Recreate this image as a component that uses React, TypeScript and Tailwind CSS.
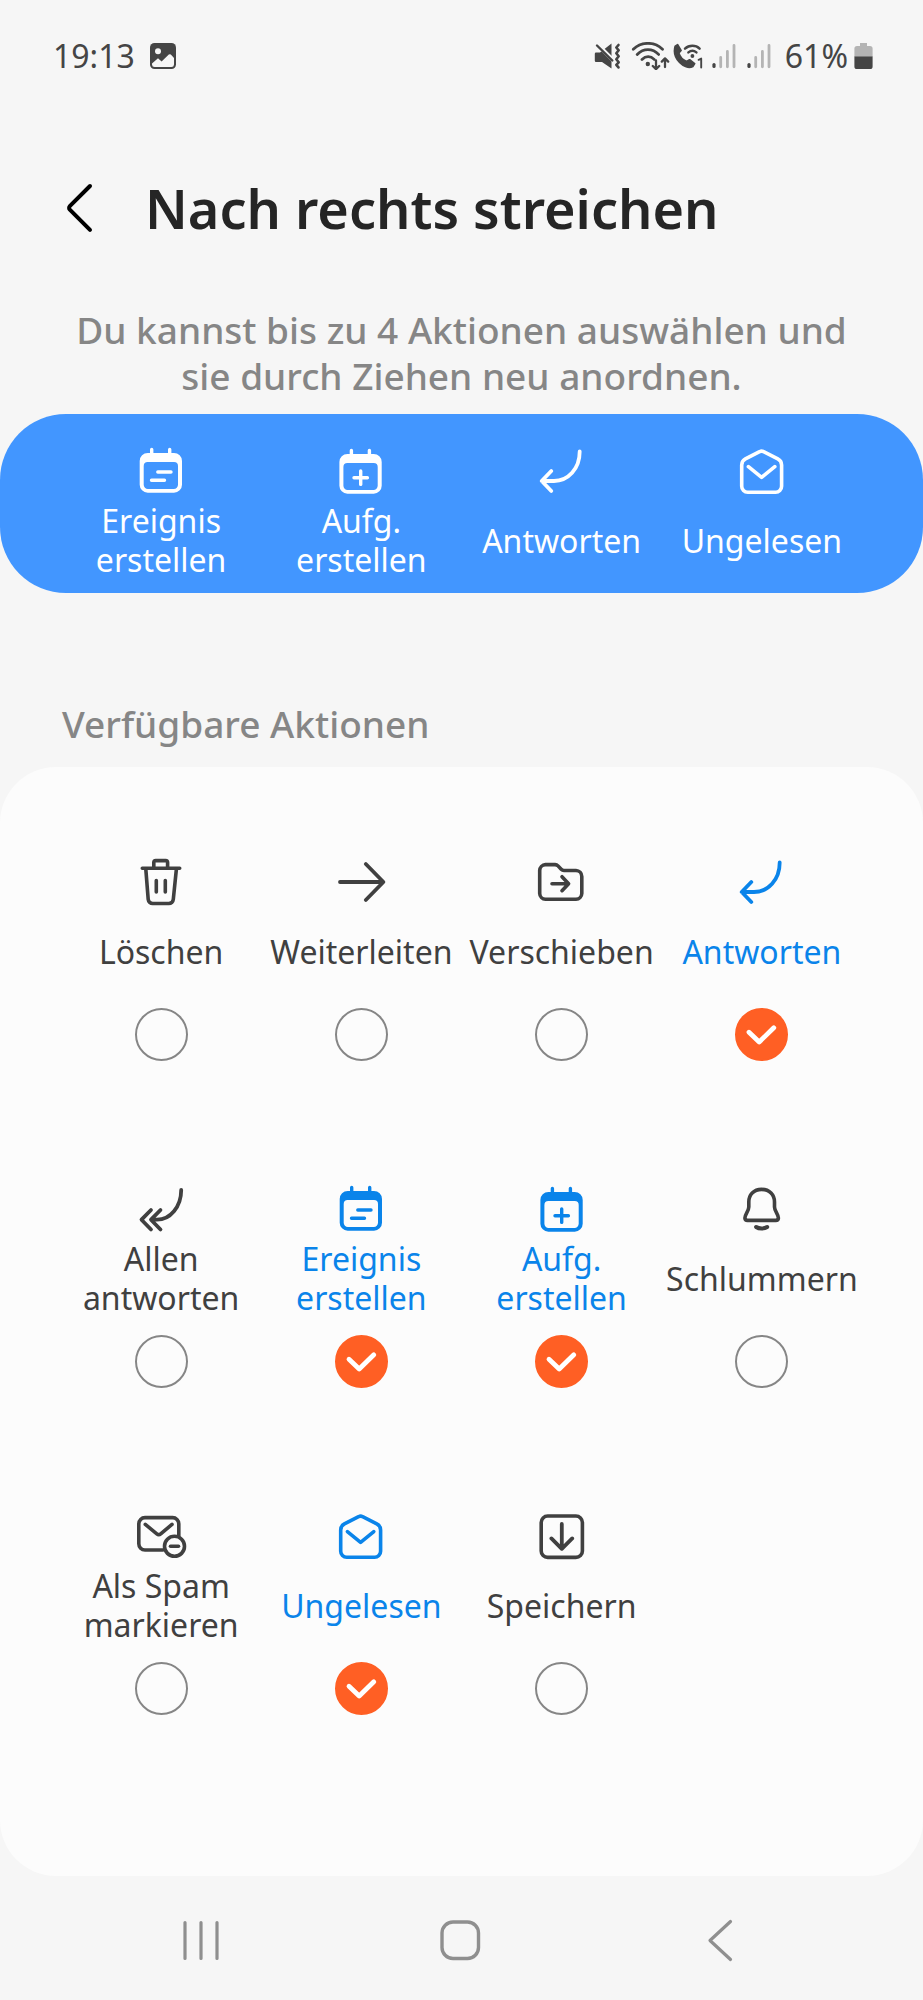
import { useState } from "react";
import type { ReactNode } from "react";

type IconName =
  | "trash"
  | "forward"
  | "move"
  | "reply"
  | "replyAll"
  | "event"
  | "task"
  | "snooze"
  | "spam"
  | "unread"
  | "save";

interface Action {
  id: IconName;
  label: string;
}

const ACTIONS: Action[] = [
  { id: "trash", label: "Löschen" },
  { id: "forward", label: "Weiterleiten" },
  { id: "move", label: "Verschieben" },
  { id: "reply", label: "Antworten" },
  { id: "replyAll", label: "Allen antworten" },
  { id: "event", label: "Ereignis erstellen" },
  { id: "task", label: "Aufg. erstellen" },
  { id: "snooze", label: "Schlummern" },
  { id: "spam", label: "Als Spam markieren" },
  { id: "unread", label: "Ungelesen" },
  { id: "save", label: "Speichern" },
];

const MAX_ACTIONS = 4;

const SHAPES: Record<IconName, ReactNode> = {
  trash: (
    <>
      <path d="M5.3 10.3H42.7M16.8 10V4.6A2 2 0 0 1 18.8 2.6H28.6A2 2 0 0 1 30.6 4.6V10" />
      <path d="M8.8 11L11.2 41.4A4.5 4.5 0 0 0 15.7 45.5H31.8A4.5 4.5 0 0 0 36.3 41.4L39.4 11" />
      <path d="M19.3 22.5V34M28.3 22.5V34" />
    </>
  ),
  forward: <path d="M3 24H46M28.8 6L46.4 24L28.8 42" strokeWidth="3.8" />,
  move: (
    <>
      <path d="M7.5 6.6H17A4 4 0 0 1 20 7.9L23.2 11.3A4 4 0 0 0 26 12.5H38A6 6 0 0 1 43.8 18.5V35.5A6 6 0 0 1 38 41.3H7.5A6 6 0 0 1 1.7 35.5V12.5A6 6 0 0 1 7.5 6.6Z" />
      <path d="M14 25.7H30M24 18.7L30.6 25.7L24 32.7" />
    </>
  ),
  reply: <path d="M41.7 4.5C41.7 22 30 34 16 34H4M13.3 24L3.7 34L13.3 44" strokeWidth="3.8" />,
  replyAll: (
    <path
      d="M44.2 5C44.2 22 33 34.7 20 34.7H14.5M14 25L4.5 34.7L14 44.5M23.5 25L14 34.7L23.5 44.5"
      strokeWidth="3.8"
    />
  ),
  event: (
    <>
      <path
        fill="currentColor"
        stroke="none"
        fillRule="evenodd"
        d="M10.7 6H37A8 8 0 0 1 45 14V37.7A8 8 0 0 1 37 45.7H10.7A8 8 0 0 1 2.7 37.7V14A8 8 0 0 1 10.7 6ZM10.7 15A4 4 0 0 0 6.7 19V37.7A4.2 4.2 0 0 0 10.9 41.9H36.8A4.2 4.2 0 0 0 41 37.7V19A4 4 0 0 0 37 15Z"
      />
      <path d="M14.7 2.5V8M32.7 2.5V8M20.8 25H34M14.5 33.3H27.5" strokeWidth="3.4" />
    </>
  ),
  task: (
    <>
      <path
        fill="currentColor"
        stroke="none"
        fillRule="evenodd"
        d="M10.4 7H36.7A8 8 0 0 1 44.7 15V38.7A8 8 0 0 1 36.7 46.7H10.4A8 8 0 0 1 2.4 38.7V15A8 8 0 0 1 10.4 7ZM10.4 16A4 4 0 0 0 6.4 20V38.7A4.2 4.2 0 0 0 10.6 42.9H36.5A4.2 4.2 0 0 0 40.7 38.7V20A4 4 0 0 0 36.7 16Z"
      />
      <path d="M14.4 3.5V9M32.4 3.5V9M17 30.7H30.4M23.7 24V37.4" strokeWidth="3.4" />
    </>
  ),
  snooze: (
    <>
      <path
        d="M23.6 4.4C15.6 4.4 10.8 10 10.8 17V22C10.8 26 6.9 29.6 6.9 33A2.6 2.6 0 0 0 9.5 35.4H37.8A2.6 2.6 0 0 0 40.4 33C40.4 29.6 36.5 26 36.5 22V17C36.5 10 31.6 4.4 23.6 4.4Z"
        strokeWidth="3.6"
      />
      <path d="M18.1 42C21 44 26.3 44 29.2 42" strokeWidth="4" />
    </>
  ),
  spam: (
    <>
      <path d="M26 38H8A6.2 6.2 0 0 1 1.8 31.8V11.8A6.2 6.2 0 0 1 8 5.6H35.6A6.2 6.2 0 0 1 41.8 11.8V24" />
      <path d="M8.3 12.4L19.8 21.8A3 3 0 0 0 23.7 21.8L35 12.4" />
      <circle cx="37.5" cy="34.3" r="10" />
      <path d="M33.5 34.3H41.5" />
    </>
  ),
  unread: (
    <>
      <path d="M21.6 4.7A4 4 0 0 1 25.6 4.7L39.8 11.9A7 7 0 0 1 43.6 18V39.3A6 6 0 0 1 37.6 45.3H9.7A6 6 0 0 1 3.7 39.3V18A7 7 0 0 1 7.4 11.9Z" />
      <path d="M10.4 19.6L23.6 30.4L36.8 19.6" />
    </>
  ),
  save: (
    <>
      <rect x="3.2" y="4" width="41.2" height="41.4" rx="6.5" />
      <path d="M23.8 12V36.5M13.4 26.4L23.8 36.8L34.2 26.4" strokeWidth="3.8" />
    </>
  ),
};

function ActionIcon({ name }: { name: IconName }) {
  return (
    <svg
      viewBox="0 0 48 48"
      className="size-12 shrink-0 overflow-visible"
      fill="none"
      stroke="currentColor"
      strokeWidth="3.6"
      strokeLinecap="round"
      strokeLinejoin="round"
      aria-hidden="true"
    >
      {SHAPES[name]}
    </svg>
  );
}

function SignalIcon() {
  return (
    <svg viewBox="0 0 24 28" className="h-7 w-6" strokeWidth="3.2" strokeLinecap="round" aria-hidden="true">
      <path d="M2 24.5V22.5" stroke="#454545" />
      <path d="M8.7 24.8V15.5M15.4 24.8V9.5M22 24.8V3.5" stroke="#b4b4b4" strokeWidth="2.8" />
    </svg>
  );
}

function StatusBar() {
  return (
    <div className="flex h-28 items-center justify-between pr-[50px] pl-[53px] text-[32px] leading-10 text-[#454545]">
      <div className="flex items-center gap-3.5">
        <span>19:13</span>
        <svg viewBox="0 0 28 28" className="size-7" aria-hidden="true">
          <rect x="1" y="1" width="26" height="26" rx="4.5" fill="#454545" />
          <circle cx="9" cy="9.2" r="3" fill="#f6f6f6" />
          <path
            d="M3 21.5L9 16.2L12.6 19.4L19.8 12.6A1.5 1.5 0 0 1 21.8 12.6L25 16V22.5A2.6 2.6 0 0 1 22.4 25H5.6A2.6 2.6 0 0 1 3 22.5Z"
            fill="#f6f6f6"
          />
        </svg>
      </div>
      <div className="flex items-center">
        <svg viewBox="0 0 28 28" className="size-7" fill="none" stroke="#454545" strokeLinecap="round" strokeLinejoin="round" aria-hidden="true">
          <path d="M2 10.5H6L17.5 1.5V26.5L8 20H2A1.3 1.3 0 0 1 .8 18.7V11.8A1.3 1.3 0 0 1 2 10.5Z" fill="#454545" stroke="none" />
          <path d="M1 0L20 19" stroke="#f6f6f6" strokeWidth="4" />
          <path d="M3 3.5L18.3 18.5" strokeWidth="2.4" />
          <path d="M24.5 3L22.3 5.5L24.7 8.3L22.3 11.3L24.7 14.3L22.3 17.3L24.7 20.3L22.3 22.8L24.5 25.4" strokeWidth="2.6" />
        </svg>
        <svg viewBox="0 0 40 28" className="ml-2 h-7 w-10" fill="none" stroke="#454545" strokeLinecap="round" strokeLinejoin="round" aria-hidden="true">
          <path d="M3.3 7.2C11.5-.6 24.5-.6 32.5 7.2M7.2 12.4C13.5 6 22.5 6 28.6 12.4M12 17.4C15.8 13.6 20.6 13.6 24.2 17.4" strokeWidth="2.8" />
          <circle cx="17.8" cy="22" r="2.2" fill="#454545" stroke="none" />
          <path d="M26 18.5V27M22.8 24L26 27.2L29.2 24M35 25V17M31.8 19.6L35 16.4L38.2 19.6" strokeWidth="2.3" />
        </svg>
        <svg viewBox="0 0 32 28" className="ml-0.5 h-7 w-8" fill="none" stroke="#454545" strokeLinecap="round" strokeLinejoin="round" aria-hidden="true">
          <path
            d="M3.2 4.2L5.6 2.8L9 8.4L6.8 11C7.8 14.6 10.8 18 14.6 19.6L17.6 17.8L22.6 21.6L20.8 24.4C12.8 28.6-.4 16.4 3.2 4.2Z"
            fill="#454545"
            strokeWidth="1.8"
          />
          <path d="M13 6.6C17 2.8 23.8 2.8 27.6 6.6M16.4 10.4C18.8 8.4 22 8.4 24.4 10.4" strokeWidth="2.5" />
          <circle cx="20.4" cy="14" r="1.9" fill="#454545" stroke="none" />
          <path d="M26.6 17.8L29.2 16.6V25.6" strokeWidth="1.9" />
        </svg>
        <div className="ml-2 flex gap-[11px]">
          <SignalIcon />
          <SignalIcon />
        </div>
        <span className="ml-3.5">61%</span>
        <svg viewBox="0 0 19 28" className="ml-1.5 h-7 w-[19px]" aria-hidden="true">
          <path d="M6 1H13V4H16A2.6 2.6 0 0 1 18.6 6.6V15H.4V6.6A2.6 2.6 0 0 1 3 4H6Z" fill="#b4b4b4" />
          <path d="M.4 14.5H18.6V24.5A2.6 2.6 0 0 1 16 27.1H3A2.6 2.6 0 0 1 .4 24.5Z" fill="#454545" />
        </svg>
      </div>
    </div>
  );
}

function ActionOption({
  action,
  checked,
  onToggle,
}: {
  action: Action;
  checked: boolean;
  onToggle: () => void;
}) {
  return (
    <label
      className={`flex cursor-pointer flex-col items-center ${checked ? "text-[#0a84ea]" : "text-[#404040]"}`}
    >
      <ActionIcon name={action.id} />
      <span className="mt-1.5 flex h-[78px] items-center text-center text-[32px] leading-[39px]">
        {action.label}
      </span>
      <span className="mt-[18px] grid size-[53px]">
        <input
          type="checkbox"
          checked={checked}
          onChange={onToggle}
          className="col-start-1 row-start-1 size-full cursor-pointer appearance-none rounded-full border-2 border-[#868686] checked:border-[#ff5f24] checked:bg-[#ff5f24]"
        />
        {checked && (
          <svg
            viewBox="0 0 53 53"
            className="pointer-events-none col-start-1 row-start-1 size-full"
            fill="none"
            stroke="#fff"
            strokeWidth="4.8"
            strokeLinecap="round"
            strokeLinejoin="round"
            aria-hidden="true"
          >
            <path d="M14 24.2L24.2 34L38.8 19.8" />
          </svg>
        )}
      </span>
    </label>
  );
}

export default function App() {
  const [selected, setSelected] = useState<IconName[]>(["event", "task", "reply", "unread"]);

  const toggle = (id: IconName) =>
    setSelected((current) => {
      if (current.includes(id)) return current.filter((entry) => entry !== id);
      return current.length < MAX_ACTIONS ? [...current, id] : current;
    });

  return (
    <div className="flex min-h-screen flex-col bg-[#f6f6f6] font-['Noto_Sans',sans-serif]">
      <StatusBar />

      <header className="mt-14 flex h-20 items-center gap-[46px] pl-[59px]">
        <button type="button" aria-label="Zurück" className="flex size-10 items-center justify-center text-black">
          <svg viewBox="0 0 40 50" className="h-[50px] w-10 shrink-0" fill="none" stroke="currentColor" strokeWidth="4" strokeLinecap="round" strokeLinejoin="round" aria-hidden="true">
            <path d="M31 3L10.8 23.2A2.4 2.4 0 0 0 10.8 26.6L31 46.8" />
          </svg>
        </button>
        <h1 className="text-[54px] leading-[72px] font-semibold text-[#252525]">Nach rechts streichen</h1>
      </header>

      <main className="flex flex-1 flex-col">
        <p className="mt-[59px] px-16 text-center text-[37px] leading-[46px] font-medium text-[#868686]">
          Du kannst bis zu 4 Aktionen auswählen und sie durch Ziehen neu anordnen.
        </p>

        <div className="mt-[15px] grid grid-cols-4 rounded-[66px] bg-[#4296ff] px-[61px] pt-[33px] pb-[14px] text-white">
          {selected.map((id) => (
            <button key={id} type="button" draggable className="flex cursor-grab flex-col items-center">
              <ActionIcon name={id} />
              <span className="mt-1.5 flex h-[78px] items-center text-center text-[32px] leading-[39px]">
                {ACTIONS.find((action) => action.id === id)?.label}
              </span>
            </button>
          ))}
        </div>

        <h2 className="mt-[108px] pl-[62px] text-[37px] leading-[46px] font-medium text-[#868686]">
          Verfügbare Aktionen
        </h2>

        <section className="mt-5 grid grid-cols-4 gap-y-[124px] rounded-[56px] bg-[#fcfcfc] px-[61px] pt-[91px] pb-[161px]">
          {ACTIONS.map((action) => (
            <ActionOption
              key={action.id}
              action={action}
              checked={selected.includes(action.id)}
              onToggle={() => toggle(action.id)}
            />
          ))}
        </section>
      </main>

      <nav
        aria-label="Systemnavigation"
        className="grid h-[124px] grid-cols-3 items-center justify-items-center px-[72px] pt-1 text-[#8f8f8f]"
      >
        <button type="button" aria-label="Letzte Apps">
          <svg viewBox="0 0 44 44" className="size-11" fill="none" stroke="currentColor" strokeWidth="3.2" strokeLinecap="round" aria-hidden="true">
            <path d="M5 4.5V40.5M21 4.5V40.5M37 4.5V40.5" />
          </svg>
        </button>
        <button type="button" aria-label="Startbildschirm">
          <svg viewBox="0 0 44 44" className="size-11" fill="none" stroke="currentColor" strokeWidth="3.4" aria-hidden="true">
            <rect x="3" y="4" width="36.5" height="36.5" rx="11" />
          </svg>
        </button>
        <button type="button" aria-label="Zurück zur vorherigen Ansicht">
          <svg viewBox="0 0 44 44" className="size-11" fill="none" stroke="currentColor" strokeWidth="3.2" strokeLinecap="round" strokeLinejoin="round" aria-hidden="true">
            <path d="M31.5 3.5L11 22.5L31.5 41.5" />
          </svg>
        </button>
      </nav>
    </div>
  );
}
